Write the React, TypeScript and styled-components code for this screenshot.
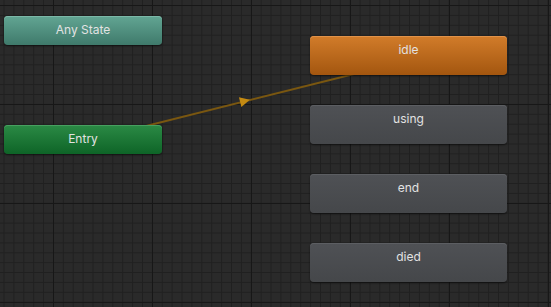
import React from 'react';
import styled, { createGlobalStyle } from 'styled-components';

type Kind = 'any' | 'entry' | 'default' | 'state';

interface INode {
    id: string
    label: string
    kind: Kind
    x: number
    y: number
    w: number
    h: number
}

const nodes: INode[] = [
    { id: 'any', label: 'Any State', kind: 'any', x: 4, y: 16, w: 158, h: 29 },
    { id: 'entry', label: 'Entry', kind: 'entry', x: 4, y: 125, w: 158, h: 29 },
    { id: 'idle', label: 'idle', kind: 'default', x: 310, y: 36, w: 197, h: 39 },
    { id: 'using', label: 'using', kind: 'state', x: 310, y: 105, w: 197, h: 39 },
    { id: 'end', label: 'end', kind: 'state', x: 310, y: 174, w: 197, h: 39 },
    { id: 'died', label: 'died', kind: 'state', x: 310, y: 243, w: 197, h: 39 },
];

const fills: Record<Kind, { top: string, bottom: string, edge: string }> = {
    any: { top: '#62a593', bottom: '#3f7a6b', edge: '#7cb8a8' },
    entry: { top: '#2b8a45', bottom: '#0e6427', edge: '#47a060' },
    default: { top: '#d27c2a', bottom: '#a3560f', edge: '#e0924a' },
    state: { top: '#4f5155', bottom: '#45474a', edge: '#5c5e62' },
};

const GlobalStyle = createGlobalStyle`
html, body {
    margin: 0;
    padding: 0;
    background: #2a2a2a;
}
#root {
    width: 551px;
    height: 307px;
}
`;

const App: React.FC = () => {
    return (
        <>
            <GlobalStyle />
            <Canvas>
                <Wires width={551} height={307}>
                    <line x1={83} x2={408} y1={141.75} y2={60.5} stroke="#7a5710" strokeWidth={2} />
                    <polygon points="-5,-5 5,0 -5,5" fill="#c48a12"
                        transform="translate(245 101) rotate(-14)" />
                </Wires>
                {nodes.map((n) => (
                    <StateNode key={n.id} kind={n.kind}
                        style={{ left: n.x, top: n.y, width: n.w, height: n.h }}>
                        <Label>{n.label}</Label>
                    </StateNode>
                ))}
            </Canvas>
        </>
    );
};

const Canvas = styled.div`
position: relative;
width: 551px;
height: 307px;
overflow: hidden;
background-color: #2a2a2a;
background-image:
    linear-gradient(to right, #171717 1px, transparent 1px),
    linear-gradient(to bottom, #171717 1px, transparent 1px),
    linear-gradient(to right, #202020 1px, transparent 1px),
    linear-gradient(to bottom, #202020 1px, transparent 1px);
background-size: 99px 99px, 99px 99px, 9.9px 9.9px, 9.9px 9.9px;
background-position: 53px 5px, 53px 5px, 3.5px 5px, 3.5px 5px;
font-family: Inter, "Liberation Sans", sans-serif;
`;

const Wires = styled.svg`
position: absolute;
left: 0;
top: 0;
`;

const StateNode = styled.div<{ kind: Kind }>`
position: absolute;
box-sizing: border-box;
display: flex;
justify-content: center;
border-radius: 4px;
background: linear-gradient(to bottom, ${p => fills[p.kind].top}, ${p => fills[p.kind].bottom});
box-shadow: inset 0 1px 0 ${p => fills[p.kind].edge}, 0 1px 2px rgba(0, 0, 0, 0.55);
`;

const Label = styled.span`
margin-top: 7px;
font-size: 12px;
line-height: 14px;
color: #e2e2e2;
`;

export default App
